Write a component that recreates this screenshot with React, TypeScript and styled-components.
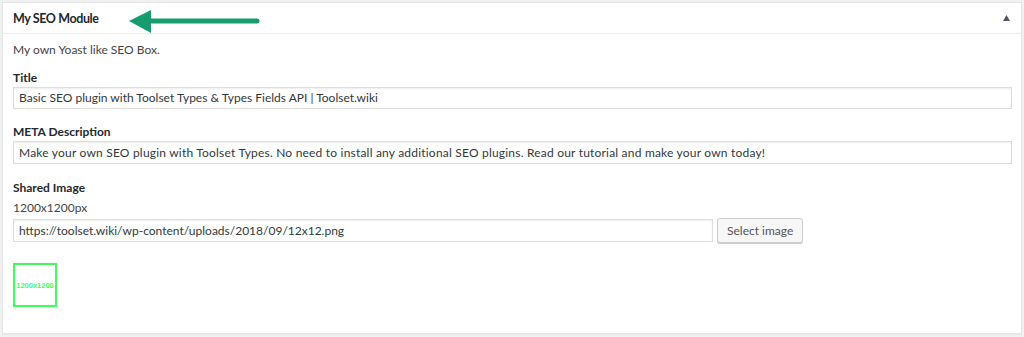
import React from "react";
import styled, { createGlobalStyle } from "styled-components";

const Global = createGlobalStyle`
  html, body { margin: 0; padding: 0; background: #f1f1f1; }
  body { font-family: Lato, "Open Sans", sans-serif; color: #444; }
  * { box-sizing: border-box; }
`;

const Page = styled.div`
  padding: 2px 2px 3px 2px;
  width: 1024px;
  height: 337px;
`;

const Panel = styled.div`
  background: #fff;
  border: 1px solid #e5e5e5;
  box-shadow: 0 1px 1px rgba(0, 0, 0, 0.04);
  height: 332px;
  display: flex;
  flex-direction: column;
`;

const Header = styled.div`
  height: 31px;
  flex: none;
  border-bottom: 1px solid #eee;
  display: flex;
  align-items: center;
  padding: 0 11px 0 10px;
  position: relative;
`;

const HeaderTitle = styled.h2`
  margin: 0;
  font-size: 12.5px;
  letter-spacing: -0.4px;
  font-weight: 700;
  color: #23282d;
`;

const ToggleArrow = styled.svg`
  margin-left: auto;
`;

const Pointer = styled.svg`
  position: absolute;
  left: 121px;
  top: 5px;
`;

const Body = styled.div`
  padding: 8px 9px 0 10px;
  display: flex;
  flex-direction: column;
`;

const Intro = styled.p`
  margin: 0 0 12px;
  font-size: 12px;
  line-height: 16px;
  color: #444;
`;

const Label = styled.div`
  font-size: 12px;
  font-weight: 700;
  line-height: 16px;
  color: #23282d;
  margin-bottom: 1px;
`;

const Hint = styled.div`
  font-size: 12px;
  line-height: 16px;
  color: #444;
  margin-top: 3px;
  margin-bottom: 2px;
`;

const Field = styled.div<{ $gap: number }>`
  display: flex;
  flex-direction: column;
  margin-bottom: ${(p) => p.$gap}px;
`;

const TextInput = styled.div<{ $width?: number; $height?: number; $spacing?: number }>`
  width: ${(p) => (p.$width ? `${p.$width}px` : "100%")};
  height: ${(p) => p.$height ?? 22}px;
  border: 1px solid #ddd;
  box-shadow: inset 0 1px 2px rgba(0, 0, 0, 0.07);
  padding: 0 5px;
  font-size: 12px;
  letter-spacing: ${(p) => p.$spacing ?? 0}px;
  line-height: ${(p) => (p.$height ?? 22) - 2}px;
  color: #32373c;
  white-space: nowrap;
  overflow: hidden;
`;

const Row = styled.div`
  display: flex;
  align-items: center;
  gap: 4px;
`;

const Button = styled.button`
  height: 25px;
  padding: 0 9px;
  font-family: inherit;
  font-size: 12px;
  color: #555;
  background: #f7f7f7;
  border: 1px solid #ccc;
  border-radius: 3px;
  box-shadow: 0 1px 0 #ccc;
`;

const Thumb = styled.div`
  margin-top: 20px;
  width: 44px;
  height: 44px;
  border: 2px solid #3dff5c;
  display: flex;
  align-items: center;
  justify-content: center;
  font-size: 7.5px;
  font-weight: 700;
  color: #3dff5c;
  font-family: "Liberation Sans", Arial, sans-serif;
`;

export default function App() {
  return (
    <>
      <Global />
      <Page>
        <Panel>
          <Header>
            <HeaderTitle>My SEO Module</HeaderTitle>
            <Pointer width="136" height="30" viewBox="0 0 136 30">
              <line x1="22" y1="13" x2="133" y2="13" stroke="#179c70" strokeWidth="5" strokeLinecap="round" />
              <polygon points="5,13 27,2 27,25" fill="#179c70" />
            </Pointer>
            <ToggleArrow width="7" height="6" viewBox="0 0 7 6">
              <polygon points="3.5,0 7,6 0,6" fill="#50575e" />
            </ToggleArrow>
          </Header>
          <Body>
            <Intro>My own Yoast like SEO Box.</Intro>
            <Field $gap={15}>
              <Label>Title</Label>
              <TextInput>Basic SEO plugin with Toolset Types &amp; Types Fields API | Toolset.wiki</TextInput>
            </Field>
            <Field $gap={16}>
              <Label>META Description</Label>
              <TextInput $height={23} $spacing={0.2}>
                Make your own SEO plugin with Toolset Types. No need to install any additional SEO plugins. Read our tutorial and make your own today!
              </TextInput>
            </Field>
            <Field $gap={0}>
              <Label>Shared Image</Label>
              <Hint>1200x1200px</Hint>
              <Row>
                <TextInput $width={700} $height={23}>
                  https://toolset.wiki/wp-content/uploads/2018/09/12x12.png
                </TextInput>
                <Button>Select image</Button>
              </Row>
              <Thumb>1200x1200</Thumb>
            </Field>
          </Body>
        </Panel>
      </Page>
    </>
  );
}
